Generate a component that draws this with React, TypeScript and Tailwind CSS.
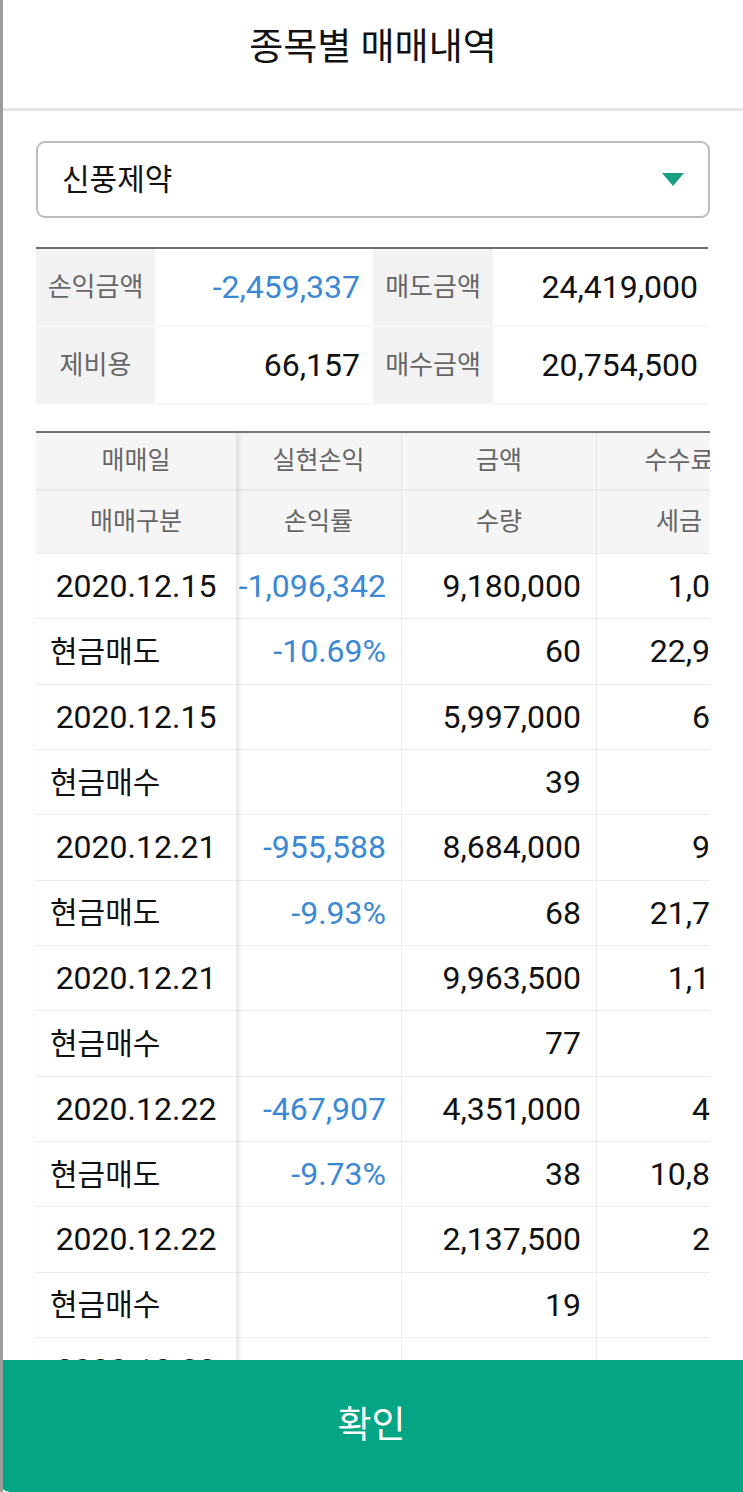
import React from "react"

type TTrade = {
    date: string
    type: string
    pl: string
    rate: string
    amount: string
    qty: string
    fee: string
    tax: string
}

const trades: TTrade[] = [
    { date: "2020.12.15", type: "현금매도", pl: "-1,096,342", rate: "-10.69%", amount: "9,180,000", qty: "60", fee: "1,046", tax: "22,950" },
    { date: "2020.12.15", type: "현금매수", pl: "", rate: "", amount: "5,997,000", qty: "39", fee: "683", tax: "" },
    { date: "2020.12.21", type: "현금매도", pl: "-955,588", rate: "-9.93%", amount: "8,684,000", qty: "68", fee: "989", tax: "21,710" },
    { date: "2020.12.21", type: "현금매수", pl: "", rate: "", amount: "9,963,500", qty: "77", fee: "1,135", tax: "" },
    { date: "2020.12.22", type: "현금매도", pl: "-467,907", rate: "-9.73%", amount: "4,351,000", qty: "38", fee: "496", tax: "10,877" },
    { date: "2020.12.22", type: "현금매수", pl: "", rate: "", amount: "2,137,500", qty: "19", fee: "243", tax: "" },
    { date: "2020.12.23", type: "현금매도", pl: "", rate: "", amount: "", qty: "", fee: "", tax: "" },
]

function SummaryRow({ l1, v1, l2, v2, blue }: { l1: string; v1: string; l2: string; v2: string; blue?: boolean }) {
    return (
        <div className="flex h-[78px] border-b-2 border-[#f7f7f7]">
            <div className="w-[119px] bg-[#f2f2f2] flex items-center justify-center text-[26px] text-[#666]">{l1}</div>
            <div className={`w-[218px] flex items-center justify-end pr-[13px] text-[32px] ${blue ? "text-[#3b88d4]" : "text-[#111]"}`}>
                {v1}
            </div>
            <div className="w-[120px] bg-[#f2f2f2] flex items-center justify-center text-[26px] text-[#666]">{l2}</div>
            <div className="flex-1 flex items-center justify-end pr-[10px] text-[32px] text-[#111]">{v2}</div>
        </div>
    )
}

export default function App() {
    return (
        <div className="w-[743px] h-[1492px] flex flex-col bg-white border-l-[3px] border-[#9c9c9c] overflow-hidden font-['Roboto','Noto_Sans_CJK_KR',sans-serif]">
            {/* Header */}
            <div className="h-[111px] shrink-0 flex justify-center pt-[22px] border-b-[3px] border-[#e4e4e4]">
                <h1 className="text-[37px] leading-[52px] text-[#111]">종목별 매매내역</h1>
            </div>

            <div className="flex-1 overflow-hidden px-[33px] pt-[30px]">
                {/* Stock select */}
                <div className="h-[77px] border-2 border-[#bdbdbd] rounded-[9px] flex items-center justify-between pl-[24px] pr-[24px]">
                    <span className="text-[30px] text-[#111]">신풍제약</span>
                    <svg width="22" height="13" viewBox="0 0 22 13">
                        <polygon points="0,0 22,0 11,13" fill="#18a080" />
                    </svg>
                </div>

                {/* Summary */}
                <div className="mt-[29px] border-t-2 border-[#6e6e6e] w-[672px]">
                    <SummaryRow l1="손익금액" v1="-2,459,337" l2="매도금액" v2="24,419,000" blue />
                    <SummaryRow l1="제비용" v1="66,157" l2="매수금액" v2="20,754,500" />
                </div>

                {/* Trade list */}
                <div className="mt-[26px] border-t-2 border-[#777] flex">
                    {/* Fixed first column */}
                    <div className="w-[200px] shrink-0 relative z-10 bg-white shadow-[3px_0_5px_rgba(0,0,0,0.1)]">
                        <div className="h-[58px] bg-[#f5f5f5] border-b-2 border-[#e9e9e9] flex items-center justify-center text-[25px] text-[#666]">매매일</div>
                        <div className="h-[62px] bg-[#f5f5f5] flex items-center justify-center text-[25px] text-[#666]">매매구분</div>
                        {trades.map((t, i) => (
                            <React.Fragment key={i}>
                                <div className="h-[65.33px] border-t border-[#ececec] flex items-center justify-center text-[32px] text-[#111]">{t.date}</div>
                                <div className="h-[65.33px] border-t border-[#ececec] flex items-center pl-[14px] text-[30px] text-[#111]">{t.type}</div>
                            </React.Fragment>
                        ))}
                    </div>

                    {/* Scrollable columns */}
                    <div className="flex-1 overflow-hidden">
                        <div className="w-[690px]">
                            <div className="flex h-[58px] bg-[#f5f5f5] border-b-2 border-[#e9e9e9] text-[25px] text-[#666]">
                                <div className="w-[165px] flex items-center justify-center">실현손익</div>
                                <div className="w-[195px] border-l border-[#e6e6e6] flex items-center justify-center">금액</div>
                                <div className="w-[165px] border-l border-[#e6e6e6] flex items-center justify-center">수수료</div>
                                <div className="w-[165px] border-l border-[#e6e6e6]" />
                            </div>
                            <div className="flex h-[62px] bg-[#f5f5f5] text-[25px] text-[#666]">
                                <div className="w-[165px] flex items-center justify-center">손익률</div>
                                <div className="w-[195px] border-l border-[#e6e6e6] flex items-center justify-center">수량</div>
                                <div className="w-[165px] border-l border-[#e6e6e6] flex items-center justify-center">세금</div>
                                <div className="w-[165px] border-l border-[#e6e6e6]" />
                            </div>
                            {trades.map((t, i) => (
                                <React.Fragment key={i}>
                                    <div className="flex h-[65.33px] border-t border-[#ececec] text-[32px] text-[#111] whitespace-nowrap">
                                        <div className="w-[165px] flex items-center justify-end pr-[15px] text-[#3b88d4]">{t.pl}</div>
                                        <div className="w-[195px] border-l border-[#ececec] flex items-center justify-end pr-[15px]">{t.amount}</div>
                                        <div className="w-[165px] border-l border-[#ececec] flex items-center justify-end pr-[15px]">{t.fee}</div>
                                        <div className="w-[165px] border-l border-[#ececec]" />
                                    </div>
                                    <div className="flex h-[65.33px] border-t border-[#ececec] text-[32px] text-[#111] whitespace-nowrap">
                                        <div className="w-[165px] flex items-center justify-end pr-[15px] text-[#3b88d4]">{t.rate}</div>
                                        <div className="w-[195px] border-l border-[#ececec] flex items-center justify-end pr-[15px]">{t.qty}</div>
                                        <div className="w-[165px] border-l border-[#ececec] flex items-center justify-end pr-[15px]">{t.tax}</div>
                                        <div className="w-[165px] border-l border-[#ececec]" />
                                    </div>
                                </React.Fragment>
                            ))}
                        </div>
                    </div>
                </div>
            </div>

            {/* Confirm button */}
            <button className="h-[132px] shrink-0 -ml-[3px] w-[743px] bg-[#03a584] rounded-bl-[10px] flex items-center justify-center text-[37px] text-white">
                확인
            </button>
        </div>
    )
}
